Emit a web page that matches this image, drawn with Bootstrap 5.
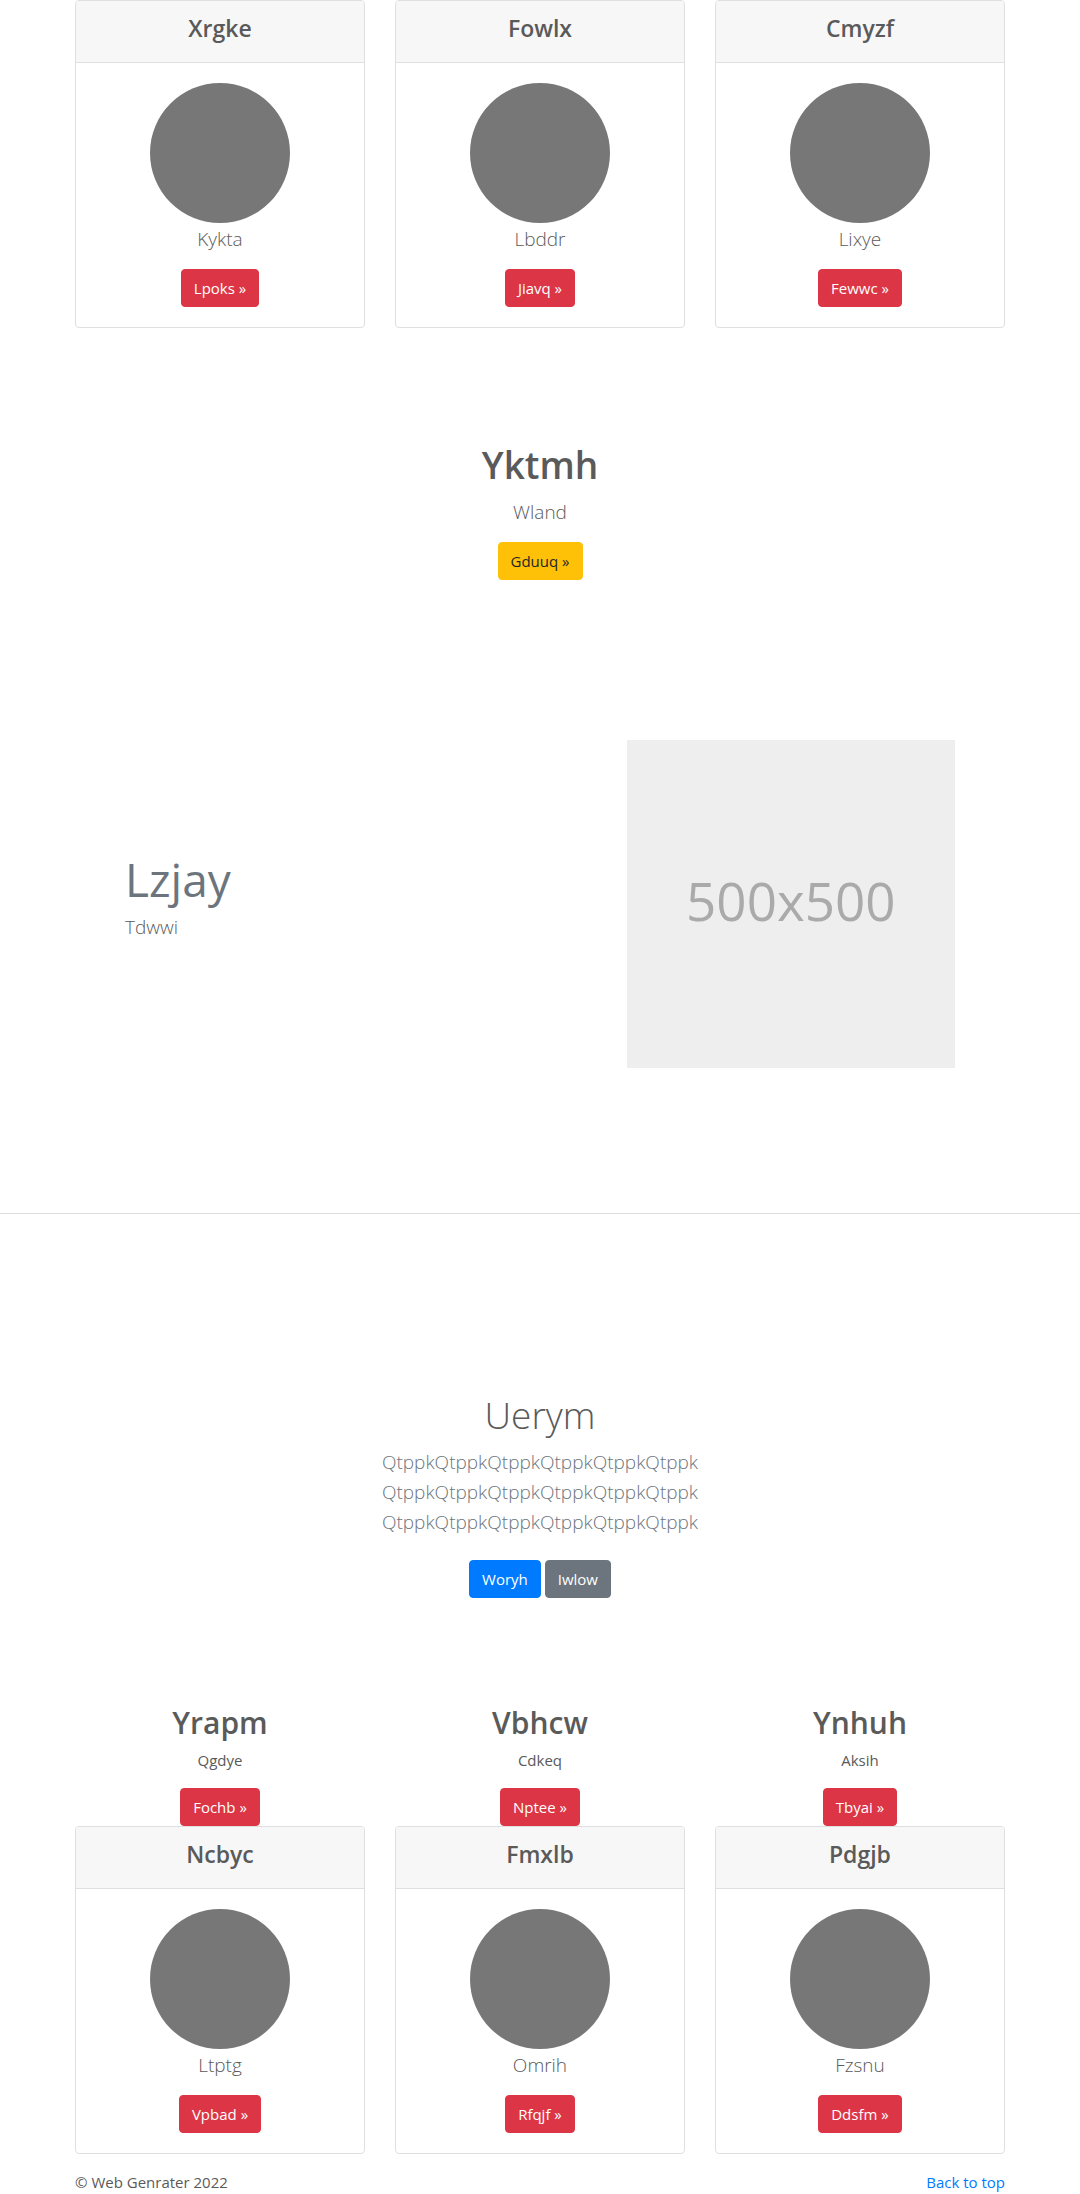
<!DOCTYPE html>
<html lang="en">
<head>
<meta charset="utf-8">
<meta name="viewport" content="width=device-width, initial-scale=1">
<title>Web Genrater</title>
<link href="https://cdn.jsdelivr.net/npm/bootstrap@5.3.0/dist/css/bootstrap.min.css" rel="stylesheet">
<style>
  body { font-family: "Open Sans", "Noto Sans", sans-serif; font-size: 15px; line-height: 24px; color: #5a5a5a; }
  .page-wrap { max-width: 960px; padding-inline: 15px; }
  .cols { --bs-gutter-x: 30px; }
  h1, h2, h3 { font-weight: 600; }
  h1 { font-size: 37px; line-height: 50px; margin-bottom: 6px; }
  h2 { font-size: 30px; line-height: 42px; margin-bottom: 4px; }
  h3 { font-size: 23px; line-height: 31px; margin-bottom: 6px; }
  p { margin-bottom: 16px; }
  .intro { font-size: 19px; line-height: 30px; font-weight: 300; padding-top: 1px; margin-bottom: 15px; }
  .btn { font-size: 15px; line-height: 24px; border-radius: 4px; }
  .btn-primary { --bs-btn-bg: #007bff; --bs-btn-border-color: #007bff; }
  .btn-warning { --bs-btn-color: #212529; }
  .card { --bs-card-border-color: #dfdfdf; --bs-card-border-radius: 4px; --bs-card-inner-border-radius: 3px; color: inherit; }
  .card-header { padding: 12px 20px; background: #f7f7f7; }
  .card-body { padding: 20px; }
  .avatar { display: block; margin: 0 auto; }
  .callout { padding: 112px 15px 109px; }
  .feature { padding: 51px 50px 145px; }
  .feature-title { font-size: 46px; line-height: 54px; font-weight: 400; color: #6c757d; margin-bottom: 5px; }
  .placeholder-img { aspect-ratio: 1; background: #eee; color: #aaa; font-size: 53px; line-height: 64px; padding-bottom: 6px; }
  .divider { margin: 0; border-top: 1px solid #dedede; opacity: 1; }
  .hero { padding: 176px 15px 104px; }
  .hero .intro { color: #6c757d; margin-bottom: 23px; }
  .hero h1 { font-weight: 300; }
  .top-link { color: #007bff; }
</style>
<script src="https://cdn.jsdelivr.net/npm/bootstrap@5.3.0/dist/js/bootstrap.bundle.min.js"></script>
</head>
<body>
<main>
  <div class="container page-wrap">
    <div class="row cols text-center">
      <div class="col-md-4"><div class="card">
        <div class="card-header"><h3>Xrgke</h3></div>
        <div class="card-body">
          <svg class="avatar" width="140" height="140" aria-hidden="true"><circle cx="70" cy="70" r="70" fill="#777"/></svg>
          <p class="intro">Kykta</p>
          <button type="button" class="btn btn-danger">Lpoks »</button>
        </div>
      </div></div>
      <div class="col-md-4"><div class="card">
        <div class="card-header"><h3>Fowlx</h3></div>
        <div class="card-body">
          <svg class="avatar" width="140" height="140" aria-hidden="true"><circle cx="70" cy="70" r="70" fill="#777"/></svg>
          <p class="intro">Lbddr</p>
          <button type="button" class="btn btn-danger">Jiavq »</button>
        </div>
      </div></div>
      <div class="col-md-4"><div class="card">
        <div class="card-header"><h3>Cmyzf</h3></div>
        <div class="card-body">
          <svg class="avatar" width="140" height="140" aria-hidden="true"><circle cx="70" cy="70" r="70" fill="#777"/></svg>
          <p class="intro">Lixye</p>
          <button type="button" class="btn btn-danger">Fewwc »</button>
        </div>
      </div></div>
    </div>

    <section class="callout text-center">
      <h1>Yktmh</h1>
      <p class="intro">Wland</p>
      <button type="button" class="btn btn-warning">Gduuq »</button>
    </section>

    <section class="feature">
      <div class="row cols align-items-center">
        <div class="col-md-7">
          <h2 class="feature-title">Lzjay</h2>
          <p class="intro">Tdwwi</p>
        </div>
        <div class="col-md-5">
          <div class="placeholder-img d-flex align-items-center justify-content-center">500x500</div>
        </div>
      </div>
    </section>
  </div>

  <hr class="divider">

  <div class="container page-wrap">
    <section class="hero text-center">
      <h1>Uerym</h1>
      <p class="intro">QtppkQtppkQtppkQtppkQtppkQtppk<br>QtppkQtppkQtppkQtppkQtppkQtppk<br>QtppkQtppkQtppkQtppkQtppkQtppk</p>
      <button type="button" class="btn btn-primary">Woryh</button>
      <button type="button" class="btn btn-secondary">Iwlow</button>
    </section>

    <div class="row cols text-center">
      <div class="col-md-4">
        <h2>Yrapm</h2>
        <p>Qgdye</p>
        <button type="button" class="btn btn-danger">Fochb »</button>
      </div>
      <div class="col-md-4">
        <h2>Vbhcw</h2>
        <p>Cdkeq</p>
        <button type="button" class="btn btn-danger">Nptee »</button>
      </div>
      <div class="col-md-4">
        <h2>Ynhuh</h2>
        <p>Aksih</p>
        <button type="button" class="btn btn-danger">Tbyai »</button>
      </div>
    </div>

    <div class="row cols text-center">
      <div class="col-md-4"><div class="card">
        <div class="card-header"><h3>Ncbyc</h3></div>
        <div class="card-body">
          <svg class="avatar" width="140" height="140" aria-hidden="true"><circle cx="70" cy="70" r="70" fill="#777"/></svg>
          <p class="intro">Ltptg</p>
          <button type="button" class="btn btn-danger">Vpbad »</button>
        </div>
      </div></div>
      <div class="col-md-4"><div class="card">
        <div class="card-header"><h3>Fmxlb</h3></div>
        <div class="card-body">
          <svg class="avatar" width="140" height="140" aria-hidden="true"><circle cx="70" cy="70" r="70" fill="#777"/></svg>
          <p class="intro">Omrih</p>
          <button type="button" class="btn btn-danger">Rfqjf »</button>
        </div>
      </div></div>
      <div class="col-md-4"><div class="card">
        <div class="card-header"><h3>Pdgjb</h3></div>
        <div class="card-body">
          <svg class="avatar" width="140" height="140" aria-hidden="true"><circle cx="70" cy="70" r="70" fill="#777"/></svg>
          <p class="intro">Fzsnu</p>
          <button type="button" class="btn btn-danger">Ddsfm »</button>
        </div>
      </div></div>
    </div>
  </div>
</main>
<footer class="container page-wrap d-flex justify-content-between pt-3">
  <span>© Web Genrater 2022</span>
  <a class="top-link text-decoration-none" href="#">Back to top</a>
</footer>
</body>
</html>
